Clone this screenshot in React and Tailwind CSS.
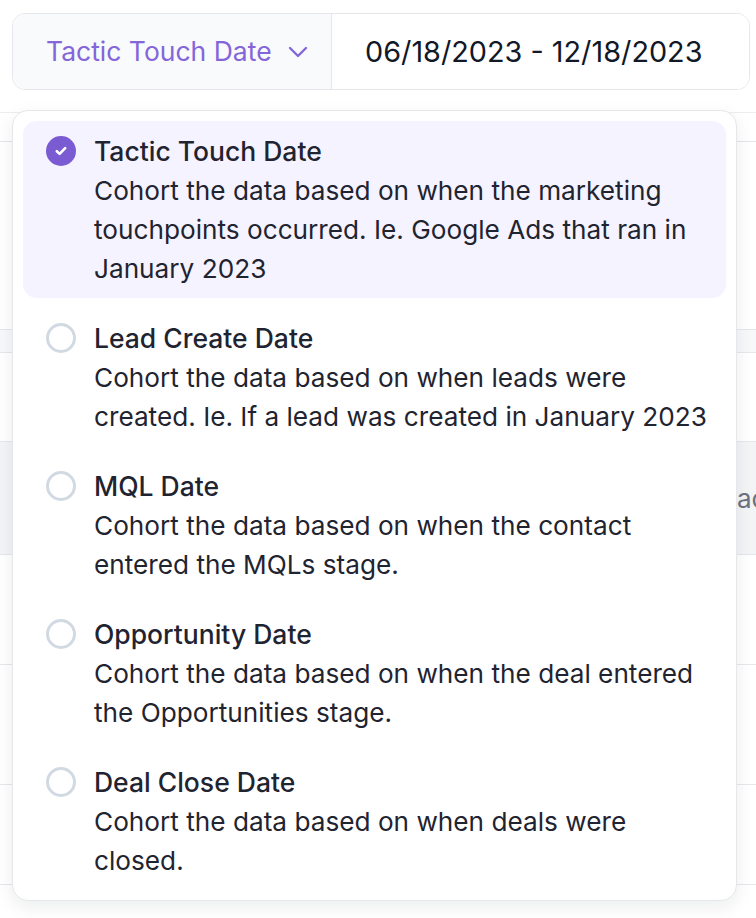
import { useState } from "react";

const options = [
  {
    id: "tactic",
    title: "Tactic Touch Date",
    desc: "Cohort the data based on when the marketing touchpoints occurred. Ie. Google Ads that ran in January 2023",
  },
  {
    id: "lead",
    title: "Lead Create Date",
    desc: "Cohort the data based on when leads were created. Ie. If a lead was created in January 2023",
  },
  {
    id: "mql",
    title: "MQL Date",
    desc: "Cohort the data based on when the contact entered the MQLs stage.",
  },
  {
    id: "opp",
    title: "Opportunity Date",
    desc: "Cohort the data based on when the deal entered the Opportunities stage.",
  },
  {
    id: "close",
    title: "Deal Close Date",
    desc: "Cohort the data based on when deals were closed.",
  },
];

function Radio({ checked }) {
  if (checked) {
    return (
      <span className="flex h-[30px] w-[30px] items-center justify-center rounded-full bg-[#7b5bd2]">
        <svg width="16" height="16" viewBox="0 0 16 16" fill="none">
          <path d="M3.8 8.2l2.8 2.7 5.6-5.8" stroke="white" strokeWidth="2.6" strokeLinecap="round" strokeLinejoin="round" />
        </svg>
      </span>
    );
  }
  return <span className="block h-[30px] w-[30px] rounded-full border-[3px] border-[#d1d9e3]" />;
}

export default function App() {
  const [selected, setSelected] = useState("tactic");
  const current = options.find((o) => o.id === selected);

  return (
    <div className="relative h-[918px] w-[756px] overflow-hidden bg-white font-['Inter','Noto_Sans',sans-serif]">
      {/* Trigger: cohort type + date range */}
      <div className="pl-3 pt-[13px]">
        <div className="flex h-[77px] w-[738px] overflow-hidden rounded-[13px] border border-[#e5e7eb]">
          <button className="flex w-[319px] items-center gap-[16px] border-r border-[#e5e7eb] bg-[#f9fafb] pl-[33px] text-[26.5px] text-[#8466da]">
            {current.title}
            <svg width="20" height="12" viewBox="0 0 20 12" fill="none">
              <path d="M2 2l8 8 8-8" stroke="#8466da" strokeWidth="2.4" strokeLinecap="round" strokeLinejoin="round" />
            </svg>
          </button>
          <div className="flex flex-1 items-center bg-white pl-[33px] text-[28.8px] text-[#111827]">
            06/18/2023 - 12/18/2023
          </div>
        </div>
      </div>

      {/* Table behind the dropdown */}
      <div className="mt-[22px] flex flex-col">
        <div className="h-[29px] border-t border-[#eceef1]" />
        <div className="h-[188px] border-t border-[#e2e5e9]" />
        <div className="h-[23px] border-t border-[#e5e7eb] bg-[#f7f8fa]" />
        <div className="h-[89px] border-t border-[#e5e7eb]" />
        <div className="flex h-[113px] items-center overflow-hidden whitespace-nowrap border-t border-[#e5e7eb] bg-[#f3f4f6] pl-[737px] text-[26px] text-[#6b7280]">
          ac
        </div>
        <div className="h-[110px] border-t border-[#e5e7eb]" />
        <div className="h-[120px] border-t border-[#e5e7eb]" />
        <div className="h-[100px] border-t border-[#e5e7eb]" />
        <div className="h-[40px] border-t border-[#e5e7eb]" />
      </div>

      {/* Dropdown menu */}
      <div className="absolute left-3 top-[110px] w-[725px] rounded-[16px] border border-[#e5e7eb] bg-white p-[10px] shadow-[0_6px_18px_rgba(15,23,42,0.08)]">
        <div className="flex flex-col gap-[10px]">
          {options.map((o) => {
            const active = o.id === selected;
            return (
              <div
                key={o.id}
                onClick={() => setSelected(o.id)}
                className={`flex cursor-pointer gap-[18px] rounded-[14px] py-[10px] pl-[23px] pr-[10px] ${active ? "bg-[#f5f3ff]" : ""}`}
              >
                <div className="flex h-[40px] shrink-0 items-center">
                  <Radio checked={active} />
                </div>
                <div>
                  <div className="text-[26.5px] font-medium leading-[40px] text-[#1f2430]">{o.title}</div>
                  <div className="text-[26.2px] leading-[39px] text-[#1f2430]">{o.desc}</div>
                </div>
              </div>
            );
          })}
        </div>
      </div>
    </div>
  );
}
